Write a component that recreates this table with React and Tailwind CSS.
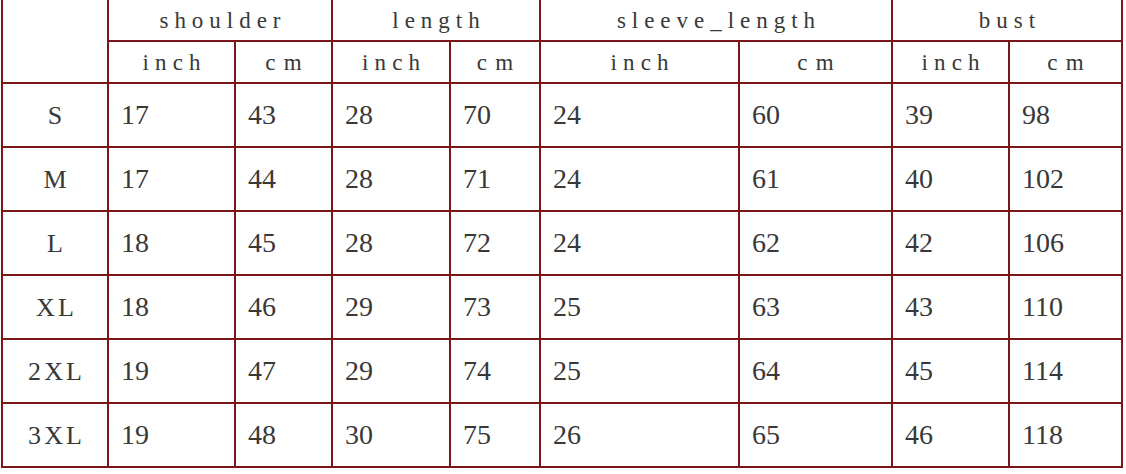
import React from "react";

const groups = ["shoulder", "length", "sleeve_length", "bust"];
const rows = [
  ["S", 17, 43, 28, 70, 24, 60, 39, 98],
  ["M", 17, 44, 28, 71, 24, 61, 40, 102],
  ["L", 18, 45, 28, 72, 24, 62, 42, 106],
  ["XL", 18, 46, 29, 73, 25, 63, 43, 110],
  ["2XL", 19, 47, 29, 74, 25, 64, 45, 114],
  ["3XL", 19, 48, 30, 75, 26, 65, 46, 118],
];

export default function App() {
  return (
    <div className="w-[1126px] h-[474px] bg-white overflow-hidden" style={{ fontFamily: '"Liberation Serif", "DejaVu Serif", serif' }}>
      <div className="ml-[1px] w-[1122px] bg-[#7a1619] p-[2px] pt-0 grid gap-[2px] grid-cols-[104px_125px_95px_116px_88px_197px_151px_115px_111px] grid-rows-[40px_40px_62px_62px_62px_62px_62px_62px] text-[#383838]">
        <div className="bg-white row-span-2"></div>
        {groups.map((g) => (
          <div key={g} className="bg-white col-span-2 flex items-center justify-center text-[23px] tracking-[0.26em] pl-[0.26em] pt-[3px]">
            {g}
          </div>
        ))}
        {groups.map((g) => (
          <React.Fragment key={g + "u"}>
            <div className="bg-white flex items-center justify-center text-[23px] tracking-[0.27em] pl-[0.27em] pt-[3px]">inch</div>
            <div className="bg-white flex items-center justify-center text-[23px] tracking-[0.36em] pl-[0.36em] pt-[3px]">cm</div>
          </React.Fragment>
        ))}
        {rows.map((r) => (
          <React.Fragment key={r[0]}>
            <div className="bg-white flex items-center justify-center text-[26px] tracking-[0.12em] pl-[0.12em]">{r[0]}</div>
            {r.slice(1).map((v, i) => (
              <div key={i} className="bg-white flex items-center pl-[12px] text-[28px]">{v}</div>
            ))}
          </React.Fragment>
        ))}
      </div>
    </div>
  );
}
